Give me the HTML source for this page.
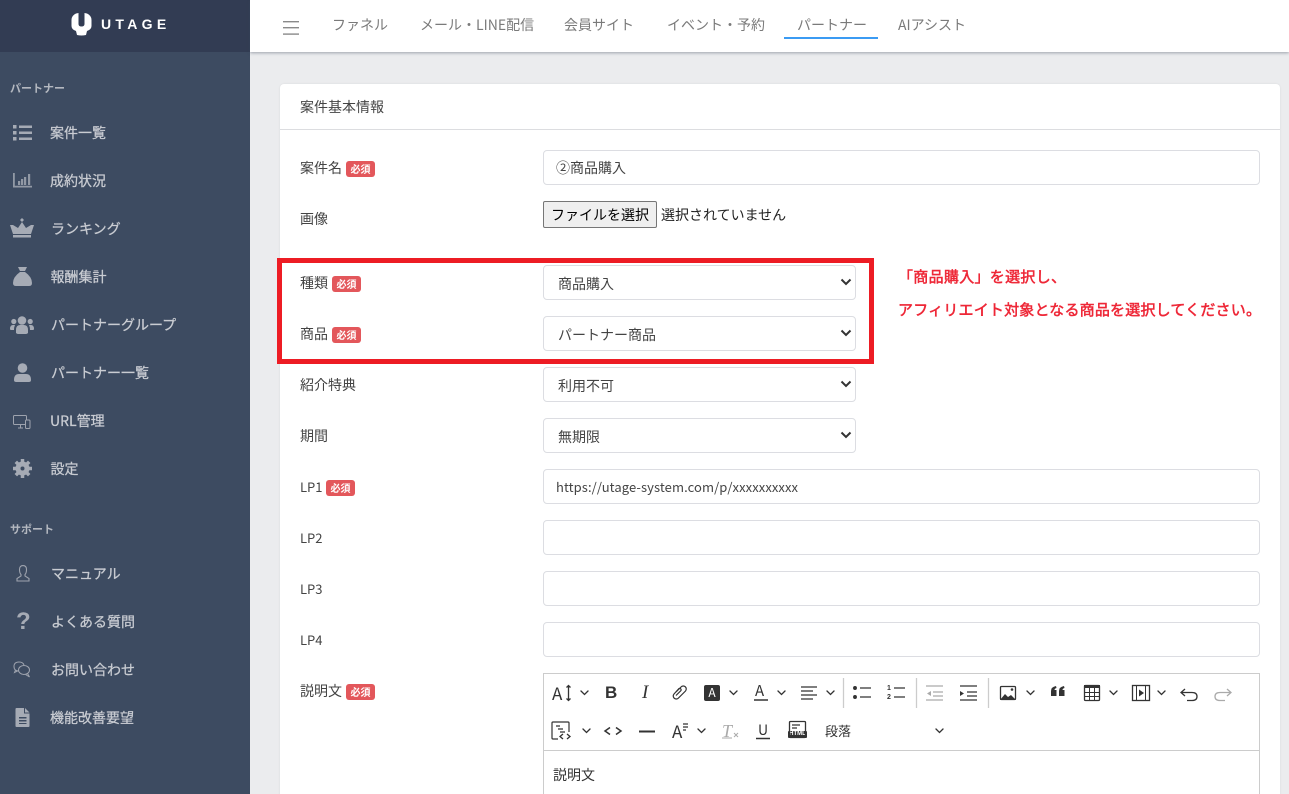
<!DOCTYPE html>
<html lang="ja"><head><meta charset="utf-8"><title>UTAGE</title>
<style>
*{box-sizing:border-box}
html,body{margin:0;padding:0;width:1289px;height:794px;overflow:hidden;background:#ebecee}
#wrap{position:absolute;left:0;top:0;width:1289px;height:794px;overflow:hidden;background:#ebecee;font-family:"Noto Sans CJK JP","Liberation Sans",sans-serif;color:#444}
.a{position:absolute;white-space:nowrap}
#side{position:absolute;left:0;top:0;width:250px;height:794px;background:#3d4b61}
#logo{position:absolute;left:0;top:0;width:250px;height:52px;background:#323c53}
.m{position:absolute;left:50px;font-size:14px;line-height:20px;color:#c9ccd2;font-weight:400;-webkit-text-stroke:.25px #c9ccd2;white-space:nowrap}
.h{position:absolute;left:10px;font-size:11px;line-height:16px;color:#b4b8c0;font-weight:700;white-space:nowrap}
.ic{position:absolute}
#top{position:absolute;left:250px;top:0;width:1039px;height:52px;background:#fff;box-shadow:0 1px 3px rgba(60,70,90,.45)}
.t{position:absolute;top:15px;font-size:14px;line-height:20px;color:#7a7a7a;white-space:nowrap}
#card{position:absolute;left:280px;top:84px;width:1000px;height:720px;background:#fff;border-radius:4px;box-shadow:0 0 2px rgba(0,0,0,.08)}
.l{position:absolute;left:300px;font-size:14px;line-height:20px;color:#444;white-space:nowrap}
.b{display:inline-block;position:absolute;width:29px;height:16px;background:#e3575b;border-radius:3px;color:#fff;font-size:10px;font-weight:700;line-height:16px;text-align:center}
.f{position:absolute;left:543px;width:717px;height:35px;border:1px solid #dcdde2;border-radius:4px;background:#fff;font:14px/33px "Noto Sans CJK JP","Liberation Sans",sans-serif;color:#444;padding:0 12px;white-space:nowrap}
select.f{width:313px;padding:2px 0 0 14px;font-size:14px;height:35px;-webkit-appearance:none;appearance:none}
.tb svg{position:absolute;overflow:visible}
</style></head><body>
<div id="wrap">
<div id="side">
<div id="logo">
<svg class="ic" style="left:71px;top:13px" width="21" height="23" viewBox="0 0 21 23"><path fill="#fff" d="M5 0.500 L7.500 0 V11 Q7.500 13.500 10.500 13.500 Q13.500 13.500 13.500 11 V0 L16 .5 Q20.500 2.500 20.500 7 V13 Q20.500 16.500 16 18 L15 22 Q10.500 23 6 22 L5 18 Q.5 16.500 .5 13 V7 Q.5 2.500 5 .5Z"/></svg>
<div class="a" style="left:101px;top:14px;font-size:14px;line-height:20px;font-weight:700;color:#fff;letter-spacing:4.300px;font-family:'Liberation Sans',sans-serif">UTAGE</div>
</div>
<div class="h" style="top:80px">パートナー</div>
<svg class="ic" style="left:13px;top:125px" width="20" height="16" viewBox="0 0 20 16" fill="#a6abb5"><rect x="0" y="0" width="3.500" height="3.500"/><rect x="0" y="6" width="3.500" height="3.500"/><rect x="0" y="12" width="3.500" height="3.500"/><rect x="6" y=".5" width="13" height="2.500"/><rect x="6" y="6.500" width="13" height="2.500"/><rect x="6" y="12.500" width="13" height="2.500"/></svg>
<div class="m" style="top:123px">案件一覧</div>
<svg class="ic" style="left:13px;top:173px" width="20" height="15" viewBox="0 0 20 15" fill="#9299a5"><path d="M0 0h1.800v12.700H19v1.800H0z"/><rect x="5" y="8" width="2.200" height="4"/><rect x="8" y="6" width="2.200" height="6"/><rect x="11" y="4" width="2.200" height="8"/><rect x="15" y="1" width="2.200" height="11"/></svg>
<div class="m" style="top:171px">成約状況</div>
<svg class="ic" style="left:10px;top:218px" width="24" height="20" viewBox="0 0 24 20" fill="#a6abb5"><path d="M12 0l2 2-2 2-2-2zM12 4l4 6 5-3 3 0-3 9H3L0 7h3l5 3z"/><rect x="3" y="17" width="18" height="2.500"/></svg>
<div class="m" style="top:219px;left:51px">ランキング</div>
<svg class="ic" style="left:13px;top:267px" width="19" height="19" viewBox="0 0 19 19" fill="#a6abb5"><path d="M5 0h9l-2 4H7zM7 5h5q7 5 7 11 0 3-3 3H3q-3 0-3-3 0-6 7-11z"/></svg>
<div class="m" style="top:267px;left:50.500px">報酬集計</div>
<svg class="ic" style="left:10px;top:316px" width="24" height="18" viewBox="0 0 24 18" fill="#a6abb5"><circle cx="12" cy="4.500" r="4.300"/><circle cx="3.800" cy="5.500" r="2.600"/><circle cx="20.200" cy="5.500" r="2.600"/><path d="M6 17v-3q0-5 4-5h4q4 0 4 5v3q-1 1-2 1H8q-1 0-2-1zM0 13q0-4 3-4h2q-1 2-1 5H1q-1 0-1-1zM24 13q0-4-3-4h-2q1 2 1 5h3q1 0 1-1z"/></svg>
<div class="m" style="top:315px;left:51px">パートナーグループ</div>
<svg class="ic" style="left:14px;top:363px" width="17" height="19" viewBox="0 0 17 19" fill="#a6abb5"><circle cx="8.500" cy="5" r="4.800"/><path d="M0 17q0-6 5-6h7q5 0 5 6 0 2-2 2H2q-2 0-2-2z"/></svg>
<div class="m" style="top:363px;left:51px">パートナー一覧</div>
<svg class="ic" style="left:13px;top:415px" width="18" height="14" viewBox="0 0 18 14" fill="none" stroke="#9ea3ae" stroke-width="1"><rect x=".5" y=".5" width="13" height="9" rx="1"/><path d="M5 13h5M7.500 10v3"/><rect x="12.500" y="5" width="4.500" height="8.500" rx="1" fill="#3d4b61"/></svg>
<div class="m" style="top:411px">URL管理</div>
<svg class="ic" style="left:13px;top:459px" width="19" height="19" viewBox="0 0 19 19"><circle cx="9.500" cy="9.500" r="4.500" fill="none" stroke="#a6abb5" stroke-width="5"/><g stroke="#a6abb5" stroke-width="3.500"><path d="M9.500 0v3M9.500 16v3M0 9.500h3M16 9.500h3M2.800 2.800l2.200 2.200M14 14l2.200 2.200M2.800 16.200L5 14M14 5l2.200-2.200"/></g></svg>
<div class="m" style="top:459px;left:50.500px">設定</div>
<div class="h" style="top:521px">サポート</div>
<svg class="ic" style="left:16px;top:565px" width="14" height="17" viewBox="0 0 14 17" fill="none" stroke="#9ea3ae" stroke-width="1.100"><path d="M7 .6Q10.500.6 10.500 4.500 10.500 8 9 9.500V11l4 2.500V16H1v-2.500L5 11V9.500Q3.500 8 3.500 4.500 3.500.6 7 .6z"/></svg>
<div class="m" style="top:564px;left:51px">マニュアル</div>
<div class="a" style="left:16px;top:609px;font-size:24px;line-height:26px;font-weight:700;color:#a6abb5;font-family:'Liberation Sans',sans-serif">?</div>
<div class="m" style="top:612px;left:51px">よくある質問</div>
<svg class="ic" style="left:13px;top:661px" width="18" height="17" viewBox="0 0 18 17" fill="none" stroke="#9ea3ae" stroke-width="1"><path d="M6 10Q1 10 1 5.500 1 1 6 1q4 0 5 3M2.500 9L1.500 11.500 4.500 10"/><ellipse cx="11" cy="9" rx="5.500" ry="4.500"/><path d="M14.500 12.500l2 3.500-4-2.500"/></svg>
<div class="m" style="top:660px;left:51px">お問い合わせ</div>
<svg class="ic" style="left:15px;top:708px" width="15" height="19" viewBox="0 0 15 19" fill="#a6abb5"><path d="M1.500 0H9v5.500h5.500V18a1 1 0 0 1-1 1h-12a1 1 0 0 1-1-1V1a1 1 0 0 1 1-1zM10 0l4.500 4.500H10z"/><rect x="4" y="9" width="7.500" height="1.500" fill="#3d4b61"/><rect x="4" y="12" width="7.500" height="1.500" fill="#3d4b61"/><rect x="4" y="15" width="7.500" height="1" fill="#3d4b61"/></svg>
<div class="m" style="top:708px">機能改善要望</div>
</div>

<div id="top">
<svg class="ic" style="left:33px;top:21px" width="16" height="14" viewBox="0 0 16 14" fill="#8a8a8a"><rect width="16" height="1.400"/><rect y="6" width="16" height="1.400"/><rect y="12.400" width="16" height="1.400"/></svg>
<div class="t" style="left:82px">ファネル</div>
<div class="t" style="left:170px">メール・LINE配信</div>
<div class="t" style="left:314px">会員サイト</div>
<div class="t" style="left:417px">イベント・予約</div>
<div class="t" style="left:547px">パートナー</div>
<div class="a" style="left:534px;top:37px;width:94px;height:2px;background:#3b9bf3"></div>
<div class="t" style="left:648px">AIアシスト</div>
</div>

<div id="card"><div class="a" style="left:0;top:45px;width:1000px;height:1px;background:#dcdde0"></div></div>
<div class="l" style="top:97px">案件基本情報</div>

<div class="l" style="top:158px">案件名</div><span class="b" style="left:346px;top:161px">必須</span>
<div class="f" style="top:150px;line-height:35px">②商品購入</div>
<div class="l" style="top:209px">画像</div>
<div class="a" style="left:543px;top:201px;width:114px;height:27px;background:#efefef;border:1px solid #767676;border-radius:2px;font-size:14px;line-height:26px;color:#000;text-align:center">ファイルを選択</div>
<div class="a" style="left:661px;top:205px;font-size:14px;line-height:20px;color:#222">選択されていません</div>

<div class="l" style="top:273px">種類</div><span class="b" style="left:332px;top:276px">必須</span>
<select class="f" style="top:265px"><option>商品購入</option></select>
<div class="l" style="top:324px">商品</div><span class="b" style="left:332px;top:327px">必須</span>
<select class="f" style="top:316px"><option>パートナー商品</option></select>
<div class="l" style="top:375px">紹介特典</div>
<select class="f" style="top:367px"><option>利用不可</option></select>
<div class="l" style="top:426px">期間</div>
<select class="f" style="top:418px"><option>無期限</option></select>
<div class="l" style="top:477px;font-size:13px">LP1</div><span class="b" style="left:326px;top:480px">必須</span>
<div class="f" style="top:469px;font-size:13px;letter-spacing:.08px">https://utage-system.com/p/xxxxxxxxxx</div>
<div class="l" style="top:528px;font-size:13px">LP2</div><div class="f" style="top:520px"></div>
<div class="l" style="top:579px;font-size:13px">LP3</div><div class="f" style="top:571px"></div>
<div class="l" style="top:630px;font-size:13px">LP4</div><div class="f" style="top:622px"></div>
<div class="l" style="top:681px">説明文</div><span class="b" style="left:346px;top:684px">必須</span>

<div class="a" style="left:277px;top:258px;width:597px;height:106px;border:5px solid #ed1c24"></div>
<div class="a" style="left:898px;top:266px;font-size:15px;line-height:22px;letter-spacing:.3px;color:#ee2737;-webkit-text-stroke:.5px #ee2737">「商品購入」を選択し、</div>
<div class="a" style="left:898px;top:299px;font-size:15px;line-height:22px;letter-spacing:.2px;color:#ee2737;-webkit-text-stroke:.5px #ee2737">アフィリエイト対象となる商品を選択してください。</div>

<div class="a" style="left:543px;top:673px;width:717px;height:140px;border:1px solid #ccc;background:#fff"></div>
<div class="a" style="left:544px;top:750px;width:715px;height:1px;background:#ccc"></div>
<div class="a" style="left:553px;top:765px;font-size:14px;line-height:20px;color:#333">説明文</div>
<div class="a" style="left:825px;top:721px;font-size:13px;line-height:20px;color:#333">段落</div>
<div class="a" style="left:552px;top:681px;font-size:17px;line-height:24px;color:#333">A</div>
<div class="a" style="left:605px;top:682px;font-size:17px;line-height:22px;font-weight:700;color:#333;font-family:'Liberation Sans',sans-serif">B</div>
<div class="a" style="left:642px;top:682px;font-size:19px;line-height:22px;font-style:italic;font-family:'Liberation Serif',serif;color:#333">I</div>
<div class="a" style="left:704px;top:685px;width:16px;height:16px;background:#333;border-radius:2px;color:#fff;font-size:12px;line-height:16px;text-align:center">A</div>
<div class="a" style="left:755px;top:681px;font-size:15px;line-height:20px;color:#333">A</div>
<div class="a" style="left:672px;top:720px;font-size:17px;line-height:22px;color:#333">A</div>
<div class="a" style="left:722px;top:720px;font-size:18px;line-height:22px;font-style:italic;font-family:'Liberation Serif',serif;color:#aaa">T</div>
<div class="a" style="left:758px;top:720px;font-size:14px;line-height:20px;color:#333">U</div>
<div class="a" style="left:788px;top:731px;width:19px;height:7px;background:#333;border-radius:1px;color:#fff;font-size:6px;line-height:7px;font-weight:700;text-align:center;font-family:'Liberation Sans',sans-serif">HTML</div>
<div class="a" style="left:887px;top:684px;font-size:7px;line-height:9px;font-weight:700;color:#333;font-family:'Liberation Sans',sans-serif">1</div>
<div class="a" style="left:887px;top:693px;font-size:7px;line-height:9px;font-weight:700;color:#333;font-family:'Liberation Sans',sans-serif">2</div>
<div class="tb">
<svg style="left:0;top:0" width="1289" height="794" viewBox="0 0 1289 794" fill="none" stroke="#333" stroke-width="1.300">
<path stroke-width="2" stroke="#333" d="M841.500 279.500l4.500 4.500 4.500-4.500M841.500 330.500l4.500 4.500 4.500-4.500M841.500 381.500l4.500 4.500 4.500-4.500M841.500 432.500l4.500 4.500 4.500-4.500"/>
<g stroke-width="1.300" stroke-linecap="round"><path d="M581 691l3.500 3.500 3.500-3.500M730 691l3.500 3.500 3.500-3.500M778 691l3.500 3.500 3.500-3.500M827 691l3.500 3.500 3.500-3.500M1027 691l3.500 3.500 3.500-3.500M1110 691l3.500 3.500 3.500-3.500M1158 691l3.500 3.500 3.500-3.500M583 729l3.500 3.500 3.500-3.500M698 729l3.500 3.500 3.500-3.500M936 729l3.500 3.500 3.500-3.500"/></g>
<path d="M568.500 686v14M566.500 687.500l2-2 2 2M566.500 698.500l2 2 2-2"/>
<path stroke-width="1.200" d="M676 692l5-5a3 3 0 0 1 4.500 4l-7 7a3 3 0 0 1-4.500-4l5-5.500a1.500 1.500 0 0 1 2 2l-5 5"/>
<path stroke-width="1.500" d="M754 700h14"/>
<path stroke-width="1.300" d="M801 687h16M801 691h12M801 695h16M801 699h12"/>
<path stroke="#ccc" d="M843.500 678v30M916.500 678v30M988.500 678v30"/>
<path stroke-width="1.300" d="M860 688h11M860 697h11M894 688h11M894 697h11"/><circle cx="855" cy="688" r="1.300" fill="#333"/><circle cx="855" cy="697" r="1.300" fill="#333"/>
<path stroke="#aaa" d="M926 686h17M933 692h10M933 696h10M926 700h17"/><path fill="#aaa" stroke="none" d="M931 691v5l-4-2.500z"/>
<path d="M960 686h17M967 692h10M967 696h10M960 700h17"/><path fill="#333" stroke="none" d="M960 691v5l4-2.500z"/>
<rect x="1000.500" y="686.500" width="15" height="13" rx="1"/><path fill="#333" stroke="none" d="M1000 700l5-6 3 3 3-2 5 5z"/><circle cx="1012" cy="689.500" r="1.300" fill="#333" stroke="none"/>
<path fill="#333" stroke="none" d="M1051 691q0-4 5-5l.5 2q-2 .5-2 2h2v6h-5.500zM1059 691q0-4 5-5l.5 2q-2 .5-2 2h2v6H1059z"/>
<rect x="1084.500" y="685.500" width="15" height="15" rx="1"/><path fill="#333" stroke="none" d="M1084 685h16v3h-16z"/><path stroke-width="1" d="M1084 692.500h16M1084 696.500h16M1089.500 688v12M1094.500 688v12"/>
<rect x="1132.500" y="685.500" width="17" height="15"/><path stroke-width="1" d="M1136.500 686v14M1145.500 686v14"/><path fill="#333" stroke="none" d="M1139 689.500v7l5-3.500z"/>
<path stroke-width="1.300" d="M1185 689l-4 3.500 4 3.500M1181 692.500h11q5 0 5 4t-5 4h-5"/>
<path stroke="#aaa" stroke-width="1.300" d="M1227 689l4 3.500-4 3.500M1231 692.500h-11q-5 0-5 4t5 4h5"/>
<path stroke-width="1.200" d="M558 739h-5a1 1 0 0 1-1-1v-15a1 1 0 0 1 1-1h15a1 1 0 0 1 1 1v9M556 726h4M558 729h5M560 732h5"/><path stroke-width="1.300" d="M563 734l-3 2.500 3 2.500M567 734l3 2.500-3 2.500"/>
<path stroke-width="1.500" d="M610 727.500l-5 3.500 5 3.500M616 727.500l5 3.500-5 3.500"/>
<path stroke-width="2" d="M639 731.500h16"/>
<path stroke-width="1.200" d="M683 724h5M683 727h5M683 730h3"/>
<path stroke="#aaa" stroke-width="1" d="M734 733l4 4M738 733l-4 4M722 738h10"/>
<path stroke-width="1.500" d="M756 738.500h14"/>
<rect x="789.500" y="721.500" width="16" height="16" rx="1"/><path stroke-width="1.200" d="M792 725h8M792 728h5"/>
</svg>
</div>
</div>
</body></html>
